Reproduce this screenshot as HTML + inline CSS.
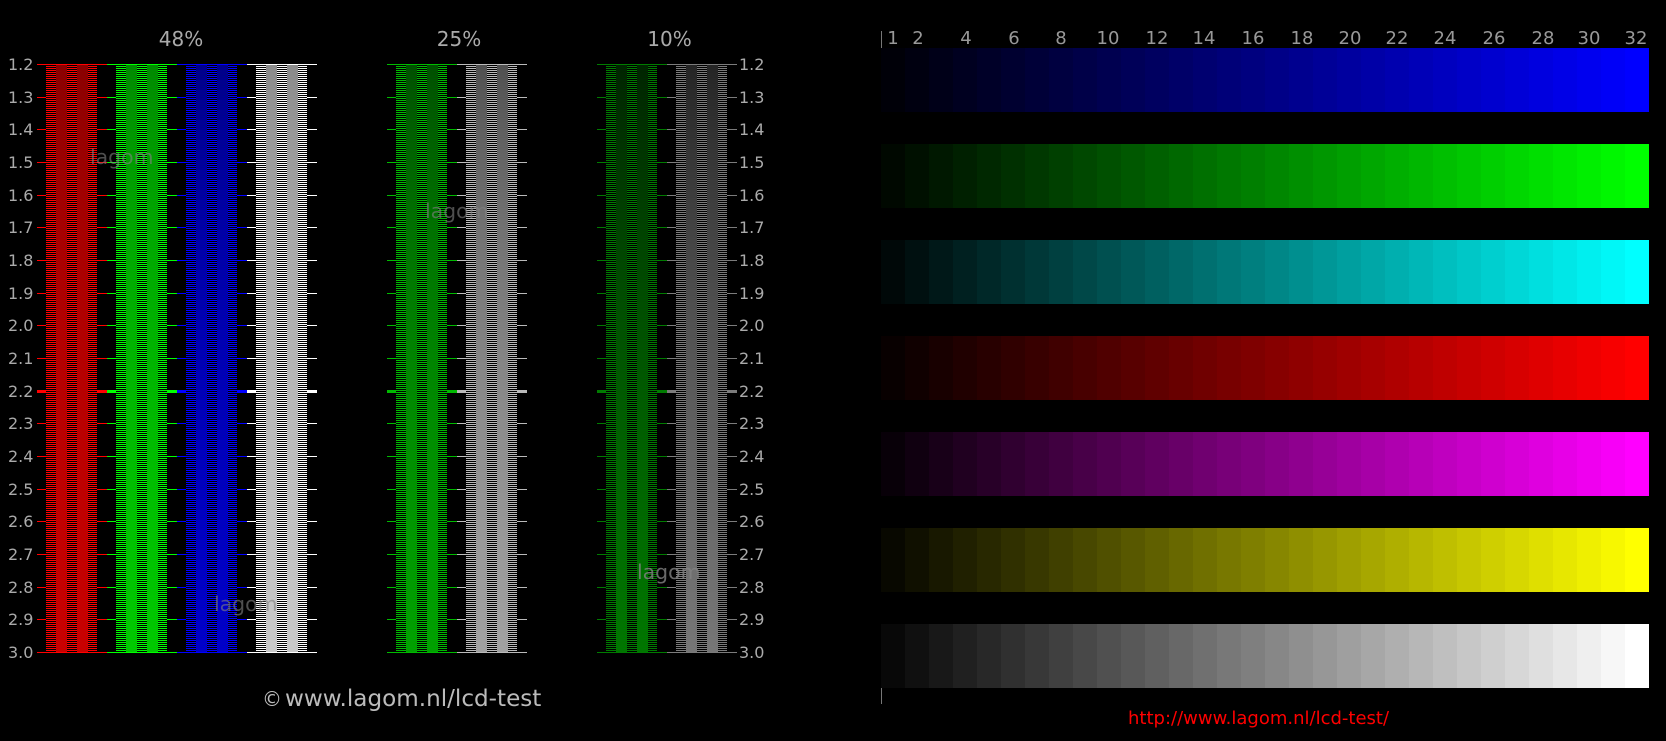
<!DOCTYPE html>
<html><head><meta charset="utf-8"><title>lagom lcd test</title>
<style>
html,body{margin:0;padding:0;background:#000;width:1666px;height:741px;overflow:hidden}
body{position:relative;font-family:"DejaVu Sans",sans-serif}
svg.m{position:absolute;left:0;top:0}
svg text{font-family:"DejaVu Sans",sans-serif;fill:#aaa}
.c{position:absolute;top:64px;width:51px;height:589px;background:repeating-linear-gradient(to bottom,var(--c) 0 1px,#000 1px 2px)}
.c i{position:absolute;top:1px;width:11px;height:587px;background:var(--g),var(--s)}
.c i:first-child{left:10px}
.c i:last-child{left:31px}
.f48{--g:linear-gradient(to bottom,rgba(0,0,0,.4575),rgba(0,0,0,.4314),rgba(0,0,0,.408),rgba(0,0,0,.387),rgba(0,0,0,.3679),rgba(0,0,0,.3506),rgba(0,0,0,.3349),rgba(0,0,0,.3204),rgba(0,0,0,.3072),rgba(0,0,0,.295),rgba(0,0,0,.2837),rgba(0,0,0,.2732),rgba(0,0,0,.2635),rgba(0,0,0,.2544),rgba(0,0,0,.2459),rgba(0,0,0,.2381),rgba(0,0,0,.2306),rgba(0,0,0,.2236),rgba(0,0,0,.217))}
.f25{--g:linear-gradient(to bottom,rgba(0,0,0,.685),rgba(0,0,0,.6557),rgba(0,0,0,.6285),rgba(0,0,0,.6031),rgba(0,0,0,.5796),rgba(0,0,0,.5576),rgba(0,0,0,.537),rgba(0,0,0,.5179),rgba(0,0,0,.5),rgba(0,0,0,.4832),rgba(0,0,0,.4675),rgba(0,0,0,.4527),rgba(0,0,0,.4388),rgba(0,0,0,.4256),rgba(0,0,0,.4133),rgba(0,0,0,.4016),rgba(0,0,0,.3905),rgba(0,0,0,.38),rgba(0,0,0,.37))}
.f10{--g:linear-gradient(to bottom,rgba(0,0,0,.8532),rgba(0,0,0,.8299),rgba(0,0,0,.8069),rgba(0,0,0,.7846),rgba(0,0,0,.7629),rgba(0,0,0,.7419),rgba(0,0,0,.7217),rgba(0,0,0,.7024),rgba(0,0,0,.6838),rgba(0,0,0,.6659),rgba(0,0,0,.6489),rgba(0,0,0,.6325),rgba(0,0,0,.6169),rgba(0,0,0,.6019),rgba(0,0,0,.5875),rgba(0,0,0,.5738),rgba(0,0,0,.5606),rgba(0,0,0,.548),rgba(0,0,0,.5358))}
.b{position:absolute;left:881px;width:768px;height:64px;background:linear-gradient(to right,rgba(0,0,0,.96875) 0 24px,rgba(0,0,0,.9375) 24px 48px,rgba(0,0,0,.90625) 48px 72px,rgba(0,0,0,.875) 72px 96px,rgba(0,0,0,.84375) 96px 120px,rgba(0,0,0,.8125) 120px 144px,rgba(0,0,0,.78125) 144px 168px,rgba(0,0,0,.75) 168px 192px,rgba(0,0,0,.71875) 192px 216px,rgba(0,0,0,.6875) 216px 240px,rgba(0,0,0,.65625) 240px 264px,rgba(0,0,0,.625) 264px 288px,rgba(0,0,0,.59375) 288px 312px,rgba(0,0,0,.5625) 312px 336px,rgba(0,0,0,.53125) 336px 360px,rgba(0,0,0,.5) 360px 384px,rgba(0,0,0,.46875) 384px 408px,rgba(0,0,0,.4375) 408px 432px,rgba(0,0,0,.40625) 432px 456px,rgba(0,0,0,.375) 456px 480px,rgba(0,0,0,.34375) 480px 504px,rgba(0,0,0,.3125) 504px 528px,rgba(0,0,0,.28125) 528px 552px,rgba(0,0,0,.25) 552px 576px,rgba(0,0,0,.21875) 576px 600px,rgba(0,0,0,.1875) 600px 624px,rgba(0,0,0,.15625) 624px 648px,rgba(0,0,0,.125) 648px 672px,rgba(0,0,0,.09375) 672px 696px,rgba(0,0,0,.0625) 696px 720px,rgba(0,0,0,.03125) 720px 744px,rgba(0,0,0,0) 744px 768px),var(--s)}
.w{position:absolute;font-size:20.4px;line-height:24px;color:rgba(130,130,130,.6);white-space:nowrap}
</style></head><body>
<svg class="m" width="1666" height="741" viewBox="0 0 1666 741">
<defs><path id="t" fill="none" stroke-width="1" shape-rendering="crispEdges" d="M0 64.5H70M0 97.5H70M0 129.5H70M0 162.5H70M0 195.5H70M0 227.5H70M0 260.5H70M0 293.5H70M0 325.5H70M0 358.5H70M0 390.5H70M0 391.5H70M0 392.5H70M0 423.5H70M0 456.5H70M0 489.5H70M0 521.5H70M0 554.5H70M0 587.5H70M0 619.5H70M0 652.5H70"/></defs>
<use href="#t" x="37" stroke="#ff0000"/><use href="#t" x="107" stroke="#00ff00"/><use href="#t" x="177" stroke="#0000ff"/><use href="#t" x="247" stroke="#ffffff"/>
<use href="#t" x="387" stroke="#00ba00"/><use href="#t" x="457" stroke="#bababa"/>
<use href="#t" x="597" stroke="#007b00"/><use href="#t" x="667" stroke="#7b7b7b"/>
<g font-size="20" text-anchor="middle"><text x="181" y="46">48%</text><text x="459" y="46">25%</text><text x="669.5" y="46">10%</text></g>
<g font-size="16">
<text x="8" y="70">1.2</text><text x="8" y="103">1.3</text><text x="8" y="135">1.4</text><text x="8" y="168">1.5</text><text x="8" y="201">1.6</text><text x="8" y="233">1.7</text><text x="8" y="266">1.8</text><text x="8" y="299">1.9</text><text x="8" y="331">2.0</text><text x="8" y="364">2.1</text><text x="8" y="397">2.2</text><text x="8" y="429">2.3</text><text x="8" y="462">2.4</text><text x="8" y="495">2.5</text><text x="8" y="527">2.6</text><text x="8" y="560">2.7</text><text x="8" y="593">2.8</text><text x="8" y="625">2.9</text><text x="8" y="658">3.0</text>
<text x="739" y="70">1.2</text><text x="739" y="103">1.3</text><text x="739" y="135">1.4</text><text x="739" y="168">1.5</text><text x="739" y="201">1.6</text><text x="739" y="233">1.7</text><text x="739" y="266">1.8</text><text x="739" y="299">1.9</text><text x="739" y="331">2.0</text><text x="739" y="364">2.1</text><text x="739" y="397">2.2</text><text x="739" y="429">2.3</text><text x="739" y="462">2.4</text><text x="739" y="495">2.5</text><text x="739" y="527">2.6</text><text x="739" y="560">2.7</text><text x="739" y="593">2.8</text><text x="739" y="625">2.9</text><text x="739" y="658">3.0</text>
</g>
<g font-size="18" text-anchor="middle"><text x="893" y="44" style="fill:#999">1</text><text x="918" y="44" style="fill:#999">2</text><text x="966" y="44" style="fill:#999">4</text><text x="1014" y="44" style="fill:#999">6</text><text x="1061" y="44" style="fill:#999">8</text><text x="1108" y="44" style="fill:#999">10</text><text x="1157" y="44" style="fill:#999">12</text><text x="1204" y="44" style="fill:#999">14</text><text x="1253" y="44" style="fill:#999">16</text><text x="1302" y="44" style="fill:#999">18</text><text x="1350" y="44" style="fill:#999">20</text><text x="1397" y="44" style="fill:#999">22</text><text x="1445" y="44" style="fill:#999">24</text><text x="1494" y="44" style="fill:#999">26</text><text x="1543" y="44" style="fill:#999">28</text><text x="1589" y="44" style="fill:#999">30</text><text x="1636" y="44" style="fill:#999">32</text></g>
<path d="M881.5 31V48M881.5 688V704" stroke="#777" stroke-width="1" shape-rendering="crispEdges" fill="none"/>
<text x="262" y="706" font-size="20" style="fill:#bbb">©</text>
<text x="285" y="706" font-size="23.1" style="fill:#bbb">www.lagom.nl/lcd-test</text>
<text x="1128" y="724" font-size="18" style="fill:#f00">http://www.lagom.nl/lcd-test/</text>
</svg>

<div class="c f48" style="left:46px;--c:#f00;--s:#f00"><i></i><i></i></div>
<div class="c f48" style="left:116px;--c:#0f0;--s:#0f0"><i></i><i></i></div>
<div class="c f48" style="left:186px;--c:#00f;--s:#00f"><i></i><i></i></div>
<div class="c f48" style="left:256px;--c:#fff;--s:#fff"><i></i><i></i></div>
<div class="c f25" style="left:396px;--c:#00ba00;--s:#0f0"><i></i><i></i></div>
<div class="c f25" style="left:466px;--c:#bababa;--s:#fff"><i></i><i></i></div>
<div class="c f10" style="left:606px;--c:#007b00;--s:#0f0"><i></i><i></i></div>
<div class="c f10" style="left:676px;--c:#7b7b7b;--s:#fff"><i></i><i></i></div>

<div class="w" style="left:90px;top:145px">lagom</div>
<div class="w" style="left:425px;top:199px">lagom</div>
<div class="w" style="left:214px;top:592px">lagom</div>
<div class="w" style="left:637px;top:560px;color:rgba(130,130,130,.8)">lagom</div>

<div class="b" style="top:48px;--s:#00f"></div>
<div class="b" style="top:144px;--s:#0f0"></div>
<div class="b" style="top:240px;--s:#0ff"></div>
<div class="b" style="top:336px;--s:#f00"></div>
<div class="b" style="top:432px;--s:#f0f"></div>
<div class="b" style="top:528px;--s:#ff0"></div>
<div class="b" style="top:624px;--s:#fff"></div>
</body></html>
